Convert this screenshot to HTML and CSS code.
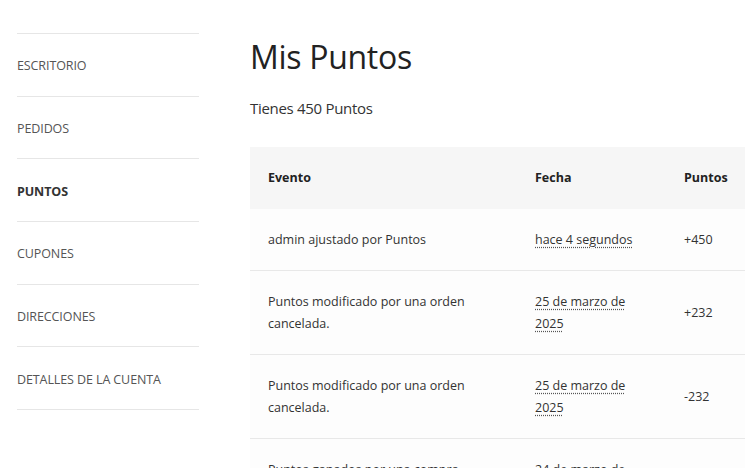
FILE: index.html
```html
<!DOCTYPE html>
<html lang="es">
<head>
<meta charset="utf-8">
<title>Mis Puntos</title>
<link rel="stylesheet" href="styles.css">
</head>
<body>
<div class="page">
  <nav class="account-nav">
    <ul>
      <li><a href="#">ESCRITORIO</a></li>
      <li><a href="#">PEDIDOS</a></li>
      <li class="active"><a href="#">PUNTOS</a></li>
      <li><a href="#">CUPONES</a></li>
      <li><a href="#">DIRECCIONES</a></li>
      <li><a href="#">DETALLES DE LA CUENTA</a></li>
    </ul>
  </nav>
  <main class="content">
    <h1 class="title">Mis Puntos</h1>
    <p class="balance">Tienes 450 Puntos</p>
    <table class="points">
      <thead>
        <tr><th class="c-event">Evento</th><th class="c-date">Fecha</th><th class="c-pts">Puntos</th></tr>
      </thead>
      <tbody>
        <tr><td>admin ajustado por Puntos</td><td><abbr>hace 4 segundos</abbr></td><td>+450</td></tr>
        <tr><td>Puntos modificado por una orden cancelada.</td><td><abbr>25 de marzo de 2025</abbr></td><td>+232</td></tr>
        <tr><td>Puntos modificado por una orden cancelada.</td><td><abbr>25 de marzo de 2025</abbr></td><td>-232</td></tr>
        <tr><td>Puntos ganados por una compra realizada.</td><td><abbr>24 de marzo de 2025</abbr></td><td>+232</td></tr>
      </tbody>
    </table>
  </main>
</div>
</body>
</html>
```
FILE: styles.css
```css
* { box-sizing: border-box; }
html, body { margin: 0; padding: 0; background: #fff; }
body {
  font-family: "Open Sans", "Noto Sans", sans-serif;
  color: #333;
  overflow: hidden;
}
.page {
  display: flex;
  align-items: flex-start;
  padding: 33px 0 0 17px;
  gap: 51px;
}
.account-nav { width: 182px; flex: none; }
.account-nav ul { list-style: none; margin: 0; padding: 0; border-top: 1px solid #e6e6e6; }
.account-nav li { border-bottom: 1px solid #e6e6e6; height: 62.7px; display: flex; align-items: center; padding-top: 2px; }
.account-nav a {
  color: #555;
  text-decoration: none;
  font-size: 12.5px;
  letter-spacing: -0.1px;
}
.account-nav li.active a { font-weight: 700; color: #333; }
.content { width: 495px; flex: none; padding-top: 1px; }
.title {
  margin: 0;
  font-weight: 400;
  font-size: 32px;
  line-height: 46px;
  color: #222;
  letter-spacing: -0.3px;
}
.balance {
  margin: 17px 0 0;
  font-size: 15px;
  line-height: 22px;
  color: #333;
  letter-spacing: -0.3px;
}
.points {
  margin-top: 28px;
  width: 495px;
  border-collapse: collapse;
  table-layout: fixed;
  font-size: 12.5px;
}
.points th, .points td {
  text-align: left;
  vertical-align: middle;
  padding: 20px 18px;
  line-height: 22px;
}
.points thead tr { background: #f6f6f6; }
.points th { font-weight: 700; color: #222; height: 62px; padding-top: 20px; padding-bottom: 20px; }
.points tbody tr { background: #fdfdfd; border-bottom: 1px solid #e8e8e8; }
.points td { color: #333; padding-top: 20px; padding-bottom: 19px; }
.c-event { width: 267px; }
.c-date { width: 149px; }
.c-pts { width: 79px; }
abbr {
  text-decoration: underline dotted #555;
  text-underline-offset: 3px;
}
```
